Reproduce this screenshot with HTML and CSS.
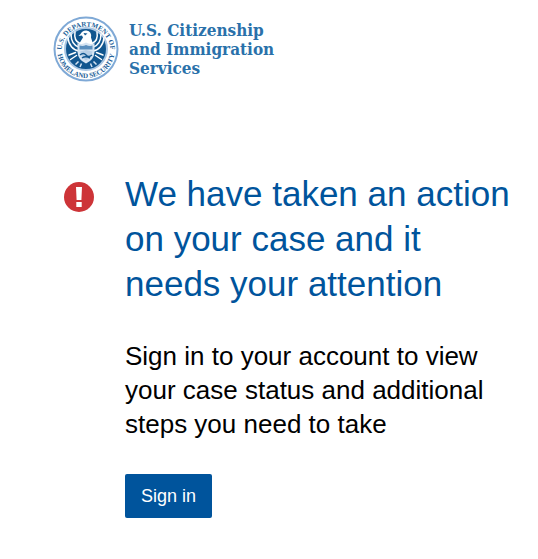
FILE: index.html
```html
<!DOCTYPE html>
<html lang="en">
<head>
  <meta charset="utf-8">
  <meta name="viewport" content="width=device-width, initial-scale=1">
  <title>U.S. Citizenship and Immigration Services</title>
  <link rel="stylesheet" href="styles.css">
</head>
<body>
  <header class="brand">
    <svg class="seal" viewBox="0 0 132 132" aria-hidden="true">
      <defs>
        <path id="arc-top" d="M17 70A49 49 0 1 1 115 70"/>
        <path id="arc-bottom" d="M8 66A58 58 0 0 0 124 66"/>
      </defs>
      <circle cx="66" cy="66" r="63" fill="#fff" stroke="#7fa9d6" stroke-width="4"/>
      <circle cx="66" cy="66" r="42" fill="#11568f" stroke="#a9c6e3" stroke-width="4"/>
      <text class="seal-text"><textPath href="#arc-top" startOffset="50%" text-anchor="middle">U.S. DEPARTMENT OF</textPath></text>
      <text class="seal-text"><textPath href="#arc-bottom" startOffset="50%" text-anchor="middle">HOMELAND SECURITY</textPath></text>
      <g fill="none" stroke="#fff" stroke-width="3" stroke-linecap="round">
        <path d="M30 43C31 58 40 68 52 70M36 36C36 50 43 60 53 63M44 32C42 44 47 52 54 55"/>
        <path d="M102 43C101 58 92 68 80 70M96 36C96 50 89 60 79 63M88 32C90 44 85 52 78 55"/>
        <path d="M47 79L35 87M45 73L32 78M85 79L97 87M87 73L100 78"/>
      </g>
      <path d="M55 36Q59 28 67 29Q78 31 76 43L80 56H52L60 43L58 39L51 40Z" fill="#fff"/>
      <path d="M61 34L69 35L64 39Z" fill="#11568f"/>
      <path d="M49 54Q58 58 66 53Q74 58 83 54V72Q82 88 66 95Q50 88 49 72Z" fill="#d6e4f2"/>
      <path d="M53 59Q60 61 66 58Q73 61 79 59V67H53Z" fill="#5b8fbe"/>
      <path d="M54 71L66 68L79 71Q77 83 66 89Q56 83 54 71Z" fill="#b7cfe6"/>
      <path d="M54 78Q61 72 66 78T78 78M58 84Q65 79 74 84" fill="none" stroke="#11568f" stroke-width="3"/>
      <path d="M51 91L45 97M57 95L54 102M75 95L78 102M81 91L87 97" fill="none" stroke="#d6e4f2" stroke-width="3"/>
    </svg>
    <div class="brand-name">U.S. Citizenship<br>and Immigration<br>Services</div>
  </header>
  <main class="notice">
    <svg class="alert" viewBox="0 0 30 30" role="img" aria-label="Alert">
      <circle cx="15" cy="15" r="15" fill="#cd3438"/>
      <path d="M12 5h6l-.6 13h-4.8zM12.3 20h5.4v5h-5.4z" fill="#fff"/>
    </svg>
    <div class="notice-body">
      <h1 class="title">We have taken an action on your case and it needs your attention</h1>
      <p class="message">Sign in to your account to view your case status and additional steps you need to take</p>
      <button class="sign-in" type="button">Sign in</button>
    </div>
  </main>
</body>
</html>
```
FILE: styles.css
```css
* {
  box-sizing: border-box;
}

body {
  margin: 0;
  background: #fff;
  color: #000;
  font-family: "Liberation Sans", Arial, sans-serif;
}

.brand {
  display: flex;
  gap: 10px;
  padding: 16px 53px 0;
}

.seal {
  flex: none;
  width: 66px;
  height: 66px;
}

.seal-text {
  fill: #1d5f99;
  font: bold 14px "Liberation Serif", serif;
}

.brand-name {
  padding-top: 5px;
  color: #2a71aa;
  font: bold 17px/19px "DejaVu Serif Condensed", "DejaVu Serif", serif;
}

.notice {
  display: flex;
  gap: 31px;
  padding: 89px 24px 40px 64px;
}

.alert {
  flex: none;
  width: 30px;
  height: 30px;
  margin-top: 11px;
}

.notice-body {
  flex: 1;
}

.title {
  margin: 0 0 33px;
  color: #00549c;
  font-size: 35px;
  font-weight: 400;
  line-height: 45px;
}

.message {
  margin: 0 0 33px;
  font-size: 26px;
  line-height: 34px;
}

.sign-in {
  height: 44px;
  padding: 0 16px;
  border: 0;
  border-radius: 2px;
  background: #00549c;
  color: #fff;
  font: 18px "Liberation Sans", Arial, sans-serif;
}
```
